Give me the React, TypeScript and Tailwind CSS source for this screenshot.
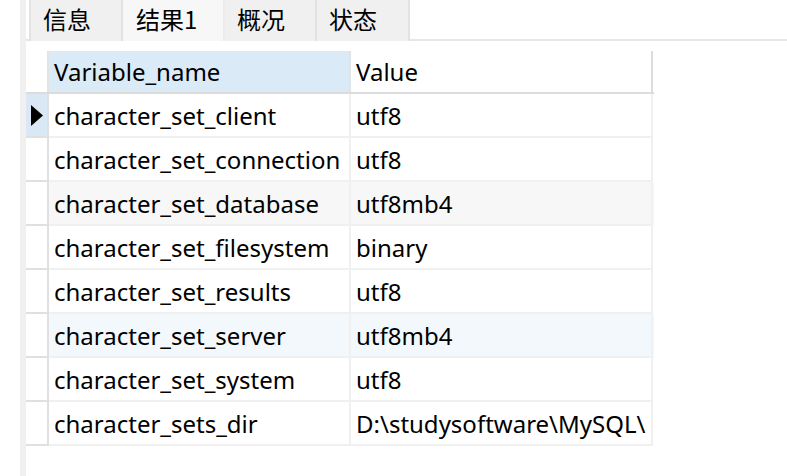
import React from 'react';

type Row = { name: string; value: string; bg?: string; current?: boolean };

const rows: Row[] = [
  { name: 'character_set_client', value: 'utf8', current: true },
  { name: 'character_set_connection', value: 'utf8' },
  { name: 'character_set_database', value: 'utf8mb4', bg: 'bg-[#f7f7f7]' },
  { name: 'character_set_filesystem', value: 'binary' },
  { name: 'character_set_results', value: 'utf8' },
  { name: 'character_set_server', value: 'utf8mb4', bg: 'bg-[#f3f8fd]' },
  { name: 'character_set_system', value: 'utf8' },
  { name: 'character_sets_dir', value: 'D:\\studysoftware\\MySQL\\' },
];

const tabs = [
  { label: '信息', w: 'w-[94px]' },
  { label: '结果1', w: 'w-[102px]', active: true },
  { label: '概况', w: 'w-[92px]' },
  { label: '状态', w: 'w-[93px]' },
];

const App: React.FC = () => {
  return (
    <div
      className="w-[787px] h-[476px] bg-white flex overflow-hidden text-black"
      style={{ fontFamily: '"Noto Sans", "Noto Sans CJK SC", sans-serif' }}
    >
      <div className="w-[20px] shrink-0 bg-white" />
      <div className="w-[6px] shrink-0 bg-[#f0f0f0]" />

      <div className="flex-1 flex flex-col">
        {/* Tab strip */}
        <div className="h-[41px] flex pl-[3px] border-b-2 border-[#e6e6e6]">
          {tabs.map((t) => (
            <div
              key={t.label}
              className={`${t.w} h-[41px] -mb-[2px] flex items-center pl-[12px] pb-[3px] text-[24px] border-r-2 first:border-l-2 ${
                t.active
                  ? 'bg-[#f7f7f7] border-[#ececec] pl-[13px]'
                  : 'bg-[#f0f0f0] border-[#e3e3e3] h-[39px] mb-0'
              }`}
              style={{ fontFamily: '"Noto Sans CJK SC", sans-serif' }}
            >
              {t.label}
            </div>
          ))}
        </div>

        {/* Result grid */}
        <div className="mt-[10px] flex flex-col w-[628px] text-[24px]">
          <div className="h-[43px] flex border-b-2 border-[#dcdcdc]">
            <div className="w-[23px] shrink-0 bg-white border-r-2 border-[#e3e3e3]" />
            <div className="w-[302px] shrink-0 bg-[#daeaf7] border-r-2 border-[#e3e3e3] flex items-center pl-[5px]">
              Variable_name
            </div>
            <div className="w-[302px] shrink-0 bg-white border-r-2 border-[#dcdcdc] flex items-center pl-[5px]">
              Value
            </div>
          </div>

          {rows.map((r) => (
            <div key={r.name} className={`h-[44px] flex ${r.bg ?? 'bg-white'}`}>
              <div
                className={`w-[23px] shrink-0 border-r-2 border-b-2 border-[#e0e0e0] flex items-center justify-center ${
                  r.current ? 'bg-[#dae8f5]' : 'bg-white'
                }`}
              >
                {r.current && (
                  <svg width="12" height="21" viewBox="0 0 12 21">
                    <path d="M0 0 L12 10.5 L0 21 Z" fill="#000" />
                  </svg>
                )}
              </div>
              <div className="w-[302px] shrink-0 border-r-2 border-b-2 border-[#f0f0f0] flex items-center pl-[5px] pt-[2px] whitespace-nowrap overflow-hidden">
                {r.name}
              </div>
              <div className="w-[302px] shrink-0 border-r-2 border-b-2 border-[#f0f0f0] flex items-center pl-[5px] pt-[2px] whitespace-nowrap overflow-hidden">
                {r.value}
              </div>
            </div>
          ))}
        </div>
      </div>
    </div>
  );
};

export default App;
